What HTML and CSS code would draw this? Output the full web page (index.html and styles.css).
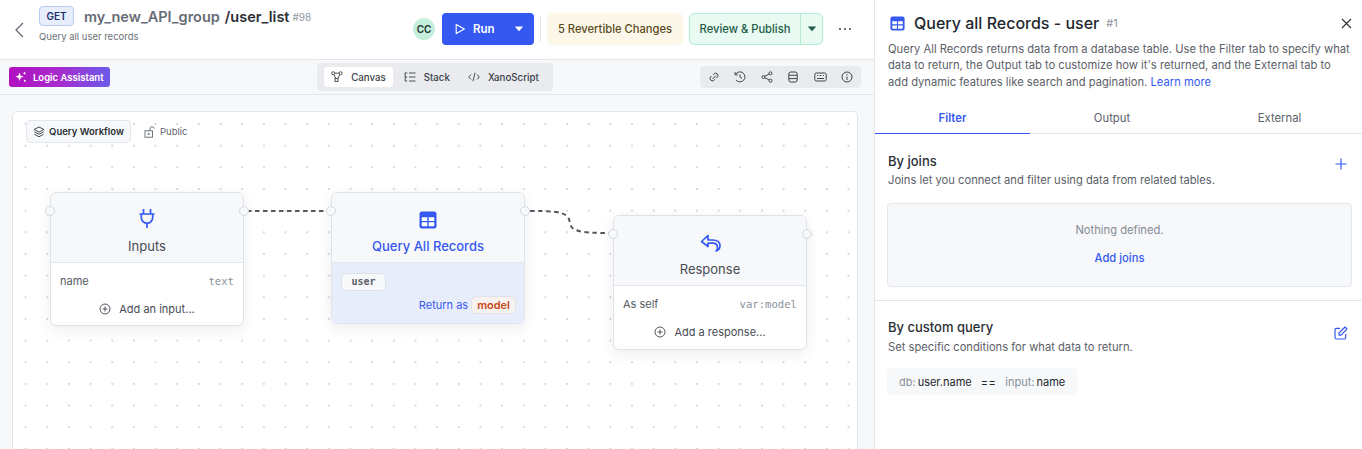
FILE: index.html
```html
<!DOCTYPE html>
<html lang="en">
<head>
<meta charset="utf-8">
<title>Query all Records</title>
<link rel="stylesheet" href="styles.css">
</head>
<body>
<div class="app">
  <main class="main">
    <header class="topbar">
      <button class="back" aria-label="Back"><svg width="12" height="18" viewBox="0 0 12 18"><path d="M10 2 3 9l7 7" fill="none" stroke="#5f6670" stroke-width="1.2"/></svg></button>
      <div class="title-block">
        <div class="title-row">
          <span class="verb">GET</span>
          <span class="group">my_new_API_group</span>
          <span class="path">/user_list</span>
          <span class="num">#98</span>
        </div>
        <div class="subtitle">Query all user records</div>
      </div>
      <div class="top-actions">
        <span class="avatar">CC</span>
        <div class="run">
          <span class="run-main"><svg width="12" height="12" viewBox="0 0 12 12"><path d="M2.2 1.4v9.2L10.400 6z" fill="none" stroke="#fff" stroke-width="1.100" stroke-linejoin="round"/></svg>Run</span>
          <svg class="caret" width="10" height="6" viewBox="0 0 10 6"><path d="M.8.5h8.4L5 5.2z" fill="#fff"/></svg>
        </div>
        <span class="divider"></span>
        <span class="revert">5 Revertible Changes</span>
        <div class="publish">
          <span class="publish-main">Review &amp; Publish</span>
          <span class="publish-caret"><svg width="10" height="6" viewBox="0 0 10 6"><path d="M.8.5h8.4L5 5.2z" fill="#1d5c45"/></svg></span>
        </div>
        <span class="more" aria-label="More"><i></i><i></i><i></i></span>
      </div>
    </header>

    <div class="toolbar">
      <button class="assistant"><svg width="12" height="12" viewBox="0 0 12 12" fill="#fff"><path d="M4.500 1.500 5.600 4.600 8.700 5.700 5.600 6.800 4.500 10 3.400 6.800.3 5.700 3.400 4.600z"/><path d="M9.500.5l.5 1.300 1.300.5-1.300.5-.5 1.300L9 2.800l-1.300-.5L9 1.800z"/><circle cx="9.800" cy="9.800" r="1"/></svg>Logic Assistant</button>
      <div class="views">
        <span class="view active"><svg width="12" height="12" viewBox="0 0 12 12" fill="none" stroke="#3a3f46" stroke-width=".9"><circle cx="2.200" cy="2.200" r="1.500"/><circle cx="9.600" cy="2.200" r="1.500"/><rect x="4" y="7.400" width="3" height="3"/><path d="M3.700 2.200h4.400M3 3.600 4.800 7.400M8.800 3.600 7 7.400"/></svg>Canvas</span>
        <span class="view"><svg width="12" height="12" viewBox="0 0 12 12" fill="none" stroke="#3a3f46" stroke-width=".9"><path d="M5 2h6.500M5 6h6.500M5 10h6.500M.7 2h2.600M1.200 2v8M1.200 6h2M1.200 10h2"/></svg>Stack</span>
        <span class="view"><svg width="12" height="12" viewBox="0 0 12 12" fill="none" stroke="#3a3f46" stroke-width=".9"><path d="M3 3.500.7 6 3 8.500M9 3.500 11.300 6 9 8.500M7 1.800 5 10.200"/></svg>XanoScript</span>
      </div>
      <div class="tools">
        <svg width="12" height="12" viewBox="0 0 12 12" fill="none" stroke="#3e444c" stroke-width="1"><path d="M5 3.800 6.300 2.500a2.400 2.400 0 0 1 3.300 3.300L8.500 7M7 8.200 5.700 9.500A2.400 2.400 0 0 1 2.400 6.200L3.500 5"/><path d="M4.500 8 8 4.500"/></svg>
        <svg width="12" height="12" viewBox="0 0 12 12" fill="none" stroke="#3e444c" stroke-width="1"><path d="M1.500 3.500A5 5 0 1 1 2 9M1 1v2.800h2.800M6 3.500V6l2 1.300"/></svg>
        <svg width="12" height="12" viewBox="0 0 12 12" fill="none" stroke="#3e444c" stroke-width="1"><circle cx="2.500" cy="6" r="1.500"/><circle cx="9.500" cy="2.300" r="1.500"/><circle cx="9.500" cy="9.700" r="1.500"/><path d="M3.900 5.300 8.100 3M3.900 6.700 8.100 9"/></svg>
        <svg width="12" height="12" viewBox="0 0 12 12" fill="none" stroke="#3e444c" stroke-width="1"><rect x="1.800" y="1" width="8.400" height="10" rx="2"/><path d="M1.800 4.300h8.400M1.800 7.600h8.400"/></svg>
        <svg width="13" height="12" viewBox="0 0 13 12" fill="none" stroke="#3e444c" stroke-width="1"><rect x=".8" y="2" width="11.400" height="8" rx="1.500"/><path d="M3 4.500h1M5.500 4.500h2M9 4.500h1M3 7.500h7" stroke-width="1.200"/></svg>
        <svg width="12" height="12" viewBox="0 0 12 12" fill="none" stroke="#3e444c" stroke-width="1"><circle cx="6" cy="6" r="5"/><path d="M6 5.500V9M6 3v1.200"/></svg>
      </div>
    </div>

    <section class="stage">
      <div class="canvas">
        <div class="canvas-head">
          <span class="workflow"><svg width="12" height="12" viewBox="0 0 12 12" fill="none" stroke="#2f343b" stroke-width=".9"><path d="M6 1 11 3.500 6 6 1 3.500zM1.500 6 6 8.200 10.500 6M1.500 8.200 6 10.800l4.500-2.600"/></svg>Query Workflow</span>
          <span class="public"><svg width="12" height="12" viewBox="0 0 12 12" fill="none" stroke="#5f6670" stroke-width=".9"><rect x="1" y="4.800" width="7.500" height="6.400"/><path d="M6 4.800V2.800a2 2 0 0 1 4-.3"/><circle cx="4.700" cy="8" r=".7"/></svg>Public</span>
        </div>
        <svg class="wires" width="846" height="338" viewBox="0 0 846 338" fill="none" stroke="#55595f" stroke-width="2" stroke-dasharray="4.500 3.500">
          <path d="M234 99H318"/>
          <path d="M517 99C535 99 550 99 555 105 558 110 556 116 563 118 570 121 585 121 598 121"/>
        </svg>

        <article class="node node-input">
          <span class="port left"></span><span class="port right"></span>
          <div class="node-head">
            <svg width="18" height="21" viewBox="0 0 18 21" fill="none" stroke="#3559f0" stroke-width="1.700"><path d="M5.500 1v5M12.500 1v5M1.500 6h15M3.300 6v3.500a5.700 5.700 0 0 0 11.400 0V6M9 15v5"/></svg>
            <h3>Inputs</h3>
          </div>
          <div class="node-body">
            <div class="row"><span>name</span><code>text</code></div>
            <div class="add"><svg width="12" height="12" viewBox="0 0 12 12" fill="none" stroke="#3f444b" stroke-width=".9"><circle cx="6" cy="6" r="5"/><path d="M6 3.500v5M3.500 6h5"/></svg>Add an input...</div>
          </div>
        </article>

        <article class="node node-query">
          <span class="port left"></span><span class="port right"></span>
          <div class="node-head">
            <svg width="18" height="18" viewBox="0 0 18 18"><rect x=".5" y=".5" width="17" height="17" rx="2.500" fill="#3559f0"/><path d="M2.700 6.300h5.600v3.700H2.700zM9.700 6.300h5.600v3.700H9.700zM2.700 11.300h5.600v3.900H3.500a.8.800 0 0 1-.8-.8zM9.700 11.300h5.600v3.100a.8.800 0 0 1-.8.800H9.700z" fill="#fff"/></svg>
            <h3>Query All Records</h3>
          </div>
          <div class="query-body">
            <span class="chip">user</span>
            <div class="return">Return as <span class="model">model</span></div>
          </div>
        </article>

        <article class="node node-response">
          <span class="port left"></span><span class="port right"></span>
          <div class="node-head">
            <svg width="21" height="18" viewBox="0 0 21 18" fill="none" stroke="#3559f0" stroke-width="1.700" stroke-linejoin="round"><path d="M8 1.500 1.500 7.500 8 12.500V9.200h4.500c3 0 5 1.400 5 4.500 0 1.300-.4 2.500-1.300 3.300 3-1.300 3.800-3.300 3.800-5.300 0-3.600-2.800-5.700-7.500-5.700H8z"/></svg>
            <h3>Response</h3>
          </div>
          <div class="node-body">
            <div class="row"><span>As self</span><code>var:model</code></div>
            <div class="add"><svg width="12" height="12" viewBox="0 0 12 12" fill="none" stroke="#3f444b" stroke-width=".9"><circle cx="6" cy="6" r="5"/><path d="M6 3.500v5M3.500 6h5"/></svg>Add a response...</div>
          </div>
        </article>
      </div>
    </section>
  </main>

  <aside class="panel">
    <div class="panel-head">
      <div class="panel-title">
        <svg class="panel-icon" width="15" height="15" viewBox="0 0 18 18"><rect x=".5" y=".5" width="17" height="17" rx="2.500" fill="#3559f0"/><path d="M2.700 6.300h5.600v3.700H2.700zM9.700 6.300h5.600v3.700H9.700zM2.700 11.300h5.600v3.900H3.500a.8.800 0 0 1-.8-.8zM9.700 11.300h5.600v3.100a.8.800 0 0 1-.8.800H9.700z" fill="#fff"/></svg>
        <h1>Query all Records - user</h1>
        <span class="hash">#1</span>
        <svg class="close" width="11" height="11" viewBox="0 0 11 11"><path d="M1 1l9 9M10 1l-9 9" stroke="#2b2f36" stroke-width="1.100"/></svg>
      </div>
      <p>Query All Records returns data from a database table. Use the Filter tab to specify what<br>data to return, the Output tab to customize how it's returned, and the External tab to<br>add dynamic features like search and pagination. <a href="#">Learn more</a></p>
    </div>
    <nav class="tabs">
      <span class="tab tab-filter">Filter</span>
      <span class="tab tab-output">Output</span>
      <span class="tab tab-external">External</span>
    </nav>
    <section class="joins">
      <div class="sec-head">
        <div><h2>By joins</h2><p>Joins let you connect and filter using data from related tables.</p></div>
        <svg class="sec-icon" width="12" height="12" viewBox="0 0 12 12"><path d="M6 .5v11M.5 6h11" stroke="#3559f0" stroke-width="1.200"/></svg>
      </div>
      <div class="empty">
        <span>Nothing defined.</span>
        <a href="#">Add joins</a>
      </div>
    </section>
    <section class="custom">
      <div class="sec-head">
        <div><h2>By custom query</h2><p>Set specific conditions for what data to return.</p></div>
        <svg class="sec-icon edit" width="14" height="14" viewBox="0 0 14 14" fill="none" stroke="#3559f0" stroke-width="1.200" stroke-linejoin="round"><path d="M6 2.300H2.500A1.500 1.500 0 0 0 1 3.800v7.700A1.500 1.500 0 0 0 2.500 13h7.700a1.500 1.500 0 0 0 1.500-1.500V8"/><path d="M5 9.200V7l6-6 2 2-6 6.200z"/></svg>
      </div>
      <div class="expr"><span class="dim">db:</span><span>user.name</span><span class="op">==</span><span class="dim">input:</span><span>name</span></div>
    </section>
  </aside>
</div>
</body>
</html>
```

FILE: styles.css
```css
* { box-sizing: border-box; }
html, body { margin: 0; height: 100%; overflow: hidden; }
body { font-family: Inter, "Liberation Sans", sans-serif; color: #23272e; background: #fff; }
h1, h2, h3, p { margin: 0; font-weight: 500; }
button { font: inherit; border: 0; background: none; padding: 0; }
a { color: #3559f0; text-decoration: none; }

.app { display: flex; width: 1362px; height: 449px; }
.main { width: 874px; flex: none; display: flex; flex-direction: column; }
.panel { width: 488px; flex: none; border-left: 1px solid #e3e6eb; }

.topbar { height: 60px; flex: none; display: flex; align-items: center; border-bottom: 1px solid #e3e6eb; padding-left: 13px; }
.back { width: 26px; height: 20px; display: flex; align-items: center; }
.title-block { display: flex; flex-direction: column; align-self: flex-start; padding-top: 6px; }
.title-row { display: flex; align-items: center; height: 20px; }
.verb { width: 35px; height: 20px; display: flex; align-items: center; justify-content: center; border: 1px solid #bcc9f7; border-radius: 4px; background: #e8edfc; color: #1d2f6e; font-size: 10px; font-weight: 600; }
.group { margin-left: 10px; font-size: 14.5px; font-weight: 600; color: #666c75; }
.path { margin-left: 5px; font-size: 14.5px; font-weight: 600; color: #2a2e35; }
.num { margin-left: 3px; font-size: 10px; color: #9097a0; margin-top: 2px; }
.subtitle { margin-top: 5px; font-size: 9.5px; line-height: 12px; color: #6b717a; }

.top-actions { margin-left: auto; display: flex; align-items: center; height: 32px; padding-right: 23px; margin-top: -2px; }
.avatar { width: 22px; height: 22px; border-radius: 50%; background: #c5efdd; color: #23302b; font-size: 10px; font-weight: 600; display: flex; align-items: center; justify-content: center; margin-right: 7px; }
.run { width: 92px; height: 32px; background: #3559f0; border-radius: 4px; color: #fff; display: flex; align-items: center; justify-content: space-between; padding: 0 10px 0 12px; }
.run-main { display: flex; align-items: center; gap: 7px; font-size: 11.5px; font-weight: 600; }
.divider { width: 1px; height: 26px; background: #e3e6eb; margin: 0 6px; }
.revert { height: 32px; width: 136px; display: flex; align-items: center; justify-content: center; background: #fbf8e9; border-radius: 5px; color: #5c4a1c; font-size: 11.2px; font-weight: 500; }
.publish { margin-left: 6px; width: 134px; height: 32px; display: flex; background: #e9faf3; border: 1px solid #b4ecd3; border-radius: 5px; color: #1d5c45; font-size: 11.2px; font-weight: 500; }
.publish-main { flex: 1; display: flex; align-items: center; justify-content: center; }
.publish-caret { width: 22px; border-left: 1px solid #b4ecd3; display: flex; align-items: center; justify-content: center; }
.more { margin-left: 16px; display: flex; gap: 3px; width: 12px; }
.more i { width: 2px; height: 2px; border-radius: 50%; background: #3e444c; flex: none; }

.toolbar { height: 35px; flex: none; display: grid; grid-template-columns: 1fr auto 1fr; align-items: center; padding: 0 13px 0 9px; background: #f7f8fa; border-bottom: 1px solid #e3e6eb; }
.assistant { justify-self: start; width: 101px; height: 20px; border-radius: 3px; background: linear-gradient(90deg, #b00fc0 0%, #a72ccd 50%, #6b5bea 100%); color: #fff; font-size: 9.5px; font-weight: 600; display: flex; align-items: center; gap: 6px; padding-left: 6px; }
.views { display: flex; align-items: center; height: 28px; padding: 0 7px; background: #e9ebee; border-radius: 4px; }
.view { height: 20px; padding: 0 7px; display: flex; align-items: center; gap: 8px; font-size: 9.7px; font-weight: 500; color: #3a3f46; border-radius: 3px; margin-right: 4px; }
.view:last-child { margin-right: 0; }
.view.active { background: #fff; }
.tools { justify-self: end; width: 161px; height: 22px; background: #e9ebee; border-radius: 4px; display: flex; align-items: center; justify-content: space-between; padding: 0 8px; }

.stage { flex: 1; background: #f7f8fa; padding: 16px 16px 0 12px; min-height: 0; }
.canvas { position: relative; height: 340px; background-color: #fff; background-image: radial-gradient(circle, #c9ced6 .6px, transparent 1px); background-size: 21.67px 21.67px; background-position: 1.8px 1.2px; border: 1px solid #e3e6eb; border-bottom: 0; border-radius: 5px 5px 0 0; }
.canvas-head { display: flex; align-items: center; padding: 8px 0 0 13px; position: relative; z-index: 1; }
.workflow { width: 105px; height: 23px; display: flex; align-items: center; justify-content: center; gap: 4px; background: #f7f8fa; border: 1px solid #e3e6eb; border-radius: 4px; font-size: 9.5px; font-weight: 600; color: #2a2e35; }
.public { margin-left: 13px; display: flex; align-items: center; gap: 4px; font-size: 9.5px; color: #5f6670; }
.wires { position: absolute; left: 0; top: 0; }

.node { position: absolute; width: 194px; border: 1px solid #dfe3e9; border-radius: 6px; background: #fff; box-shadow: 0 4px 14px rgba(30, 40, 60, .08); }
.node-input { left: 37px; top: 80px; height: 134px; }
.node-query { left: 318px; top: 80px; height: 132px; }
.node-response { left: 600px; top: 103px; height: 135px; }
.port { position: absolute; top: 13px; width: 10px; height: 10px; border-radius: 50%; background: #f7f8fa; border: 1px solid #d5d9df; z-index: 2; }
.port.left { left: -6px; }
.port.right { right: -6px; }
.node-head { height: 70px; display: flex; flex-direction: column; align-items: center; justify-content: flex-end; padding-bottom: 8px; background: #f7f8fa; border-bottom: 1px solid #e3e6eb; border-radius: 5px 5px 0 0; gap: 9px; }
.node-head h3 { font-size: 13px; line-height: 16px; font-weight: 400; color: #474c54; }
.node-query .node-head h3 { color: #3559f0; font-weight: 500; }
.node-body { padding: 0 9px; }
.row { display: flex; justify-content: space-between; align-items: center; height: 36px; font-size: 11px; color: #555b63; }
.row code { font-family: "DejaVu Sans Mono", "Liberation Mono", monospace; font-size: 10.6px; color: #8a9099; }
.add { height: 20px; display: flex; align-items: center; justify-content: center; gap: 8px; font-size: 11px; color: #474c54; }

.query-body { height: 60px; background: #e8edfc; border-radius: 0 0 5px 5px; padding: 10px 8px 0 9px; }
.chip { display: block; width: 45px; height: 18px; line-height: 16px; text-align: center; background: #f7f8fa; border: 1px solid #dfe3e9; border-radius: 5px; font-family: "DejaVu Sans Mono", "Liberation Mono", monospace; font-size: 10px; font-weight: 700; color: #5c6169; }
.return { display: flex; justify-content: flex-end; align-items: center; gap: 3px; margin-top: 5px; font-size: 11px; color: #3559f0; }
.model { height: 18px; line-height: 16px; padding: 0 5px; background: #f7f2ef; border: 1px solid #dfe3e9; border-radius: 5px; color: #c8481b; font-weight: 600; }

.panel-head { padding: 14px 8px 0 13px; height: 102px; }
.panel-title { display: flex; align-items: center; height: 18px; }
.panel-icon { margin-left: 2px; }
.panel-title h1 { margin-left: 9px; font-size: 16px; font-weight: 500; color: #23272e; }
.hash { margin-left: 7px; font-size: 11px; color: #8a9099; }
.close { margin-left: auto; margin-right: 2px; }
.panel-head p { margin-top: 8.5px; font-size: 11.2px; line-height: 16.5px; font-weight: 400; color: #5b6068; white-space: nowrap; }
.tabs { display: flex; height: 32px; border-bottom: 1px solid #e3e6eb; font-size: 11.3px; color: #5b6068; }
.tab { flex: none; display: flex; align-items: center; justify-content: center; height: 32px; }
.tab-filter { width: 155px; color: #3559f0; font-weight: 600; border-bottom: 1px solid #3559f0; }
.tab-output { width: 164px; }
.tab-external { width: 168px; padding-left: 3px; }

.joins { height: 167px; padding: 19px 10px 0 13px; border-bottom: 1px solid #e3e6eb; }
.sec-head { display: flex; justify-content: space-between; align-items: flex-start; }
.sec-head h2 { font-size: 13px; line-height: 17px; font-weight: 500; color: #2a2e35; }
.sec-head p { margin-top: 4px; font-size: 11.2px; line-height: 13px; font-weight: 400; color: #5b6068; }
.sec-icon { margin-top: 5px; margin-right: 5px; }
.empty { margin: 16px 0 0 -1px; height: 84px; padding-bottom: 2px; background: #f7f8fa; border: 1px solid #e3e6eb; border-radius: 4px; display: flex; flex-direction: column; align-items: center; justify-content: center; gap: 14px; font-size: 11.2px; color: #858b94; }
.empty a { font-weight: 500; }
.custom { padding: 18px 10px 0 13px; }
.custom .sec-head p { margin-top: 5px; }
.edit { margin-top: 7px; margin-right: 4px; }
.expr { margin: 14px 0 0 -1px; display: inline-flex; align-items: center; height: 27px; padding: 0 12px; background: #f7f8fa; border-radius: 4px; font-size: 11px; color: #23272e; }
.dim { color: #8a9099; margin-right: 2px; }
.op { margin: 0 9px; letter-spacing: .5px; }
```
